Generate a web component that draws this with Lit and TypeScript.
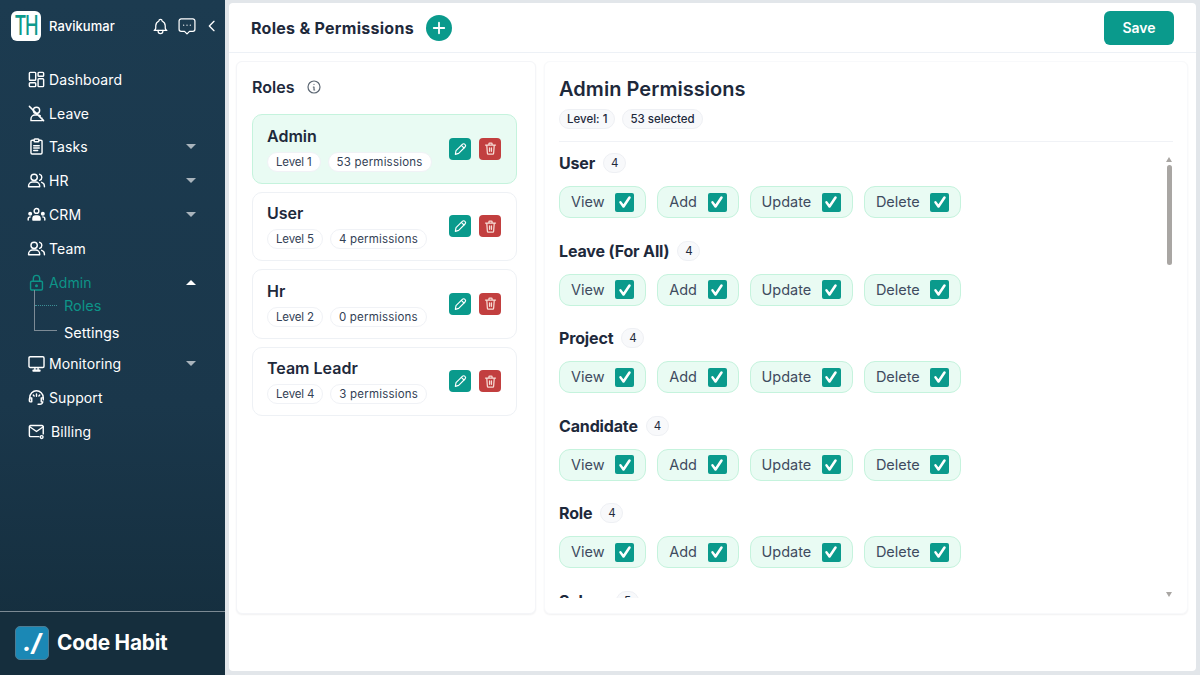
import { LitElement, css, html, svg } from 'lit'
import { customElement } from 'lit/decorators.js'

const icon = (body: unknown, size = 20, sw = 1.8) => html`<svg class="ico" width=${size} height=${size} viewBox="0 0 24 24" fill="none" stroke="currentColor" stroke-width=${sw} stroke-linecap="round" stroke-linejoin="round">${body}</svg>`

const icons: Record<string, unknown> = {
  dashboard: svg`<rect x="3" y="3" width="8" height="10" rx="1"/><rect x="14" y="3" width="7" height="5" rx="1"/><rect x="14" y="11" width="7" height="10" rx="1"/><rect x="3" y="16" width="8" height="5" rx="1"/>`,
  leave: svg`<circle cx="12" cy="8" r="4"/><path d="M5 21v-2a5 5 0 0 1 5-5h4c1 0 2 .3 2.8 .9M19 18v3H6M3 3l18 18"/>`,
  tasks: svg`<path d="M9 4H6.500A1.500 1.500 0 0 0 5 5.500V20a1.500 1.500 0 0 0 1.500 1.500h11A1.500 1.500 0 0 0 19 20V5.500A1.500 1.500 0 0 0 17.500 4H15"/><rect x="9" y="2.500" width="6" height="3.500" rx="1"/><path d="M8.500 11h7M8.500 14h7M8.500 17h5"/>`,
  users: svg`<circle cx="9" cy="8" r="4"/><path d="M2 20v-1a5 5 0 0 1 5-5h4a5 5 0 0 1 5 5v1zM16 4.200a4 4 0 0 1 0 7.600M22 20v-1a5 5 0 0 0-3.500-4.700"/>`,
  crm: svg`<circle cx="12" cy="7.500" r="3"/><path d="M7.500 19v-1.500a3.500 3.500 0 0 1 3.500-3.500h2a3.500 3.500 0 0 1 3.500 3.500V19z" fill="currentColor"/><circle cx="4" cy="11" r="1.600" fill="currentColor"/><circle cx="20" cy="11" r="1.600" fill="currentColor"/><path d="M1.500 19v-1.500a2.500 2.500 0 0 1 2.500-2.500M22.500 19v-1.500a2.500 2.500 0 0 0-2.500-2.500"/>`,
  lock: svg`<rect x="4.500" y="10.500" width="15" height="11" rx="1.500"/><path d="M8 10.500V7a4 4 0 0 1 8 0v3.500"/><circle cx="12" cy="16" r="1" fill="currentColor"/>`,
  monitor: svg`<rect x="2.500" y="3.500" width="19" height="13.500" rx="1.500"/><path d="M8 21h8" stroke-width="2.600"/><path d="M10 17.500v2.500M14 17.500v2.500"/>`,
  support: svg`<path d="M3.500 15v-3a8.500 8.500 0 0 1 17 0v3"/><path d="M3.500 12.500H6v5H4.500a1.500 1.500 0 0 1-1.500-1.500v-2zM20.500 12.500H18v5h1.500M20 17.500a4 4 0 0 1-4 3h-2"/><path d="M12 7.500v3M8 9l1 1M16 9l-1 1"/>`,
  billing: svg`<path d="M20.500 15V6a1.500 1.500 0 0 0-1.500-1.500H4.500A1.500 1.500 0 0 0 3 6v11a1.500 1.500 0 0 0 1.500 1.500H15"/><path d="M3.500 6l8.500 6 8.500-6"/><circle cx="18.500" cy="19" r="1.800"/>`,
  bell: svg`<path d="M10 5a2 2 0 1 1 4 0 7 7 0 0 1 4 6v3a4 4 0 0 0 2 3H4a4 4 0 0 0 2-3v-3a7 7 0 0 1 4-6"/><path d="M9 17v1a3 3 0 0 0 6 0v-1"/>`,
  chat: svg`<path d="M5 3.500h14a2.500 2.500 0 0 1 2.500 2.500v10a2.500 2.500 0 0 1-2.500 2.500h-4L12 21.500 9 18.500H5A2.500 2.500 0 0 1 2.500 16V6A2.500 2.500 0 0 1 5 3.500z"/><path d="M8 11h.01M12 11h.01M16 11h.01"/>`,
  back: svg`<path d="M15 5l-7 7 7 7"/>`,
  info: svg`<circle cx="12" cy="12" r="9"/><path d="M12 8h.01M11 12h1v4.500h1"/>`,
  plus: svg`<path d="M12 5v14M5 12h14"/>`,
  pencil: svg`<path d="M6 14.500 15.500 5a2.800 2.800 0 0 1 4 4L10 18.500 5 20z"/><path d="M14 6.500l4 4"/>`,
  trash: svg`<path d="M4 6.500h16M9.500 6.500V4.500a1 1 0 0 1 1-1h3a1 1 0 0 1 1 1v2M6 6.500l1 13a1.500 1.500 0 0 0 1.500 1.500h7a1.500 1.500 0 0 0 1.500-1.500l1-13"/><path d="M10.500 11v5.500M13.500 11v5.500"/>`,
  check: svg`<path d="M6 12.500l4 5.500 8-12"/>`,
}

type NavItem = { label: string; icon: string; caret?: 'down' | 'up'; active?: boolean }

const navTop: NavItem[] = [
  { label: 'Dashboard', icon: 'dashboard' },
  { label: 'Leave', icon: 'leave' },
  { label: 'Tasks', icon: 'tasks', caret: 'down' },
  { label: 'HR', icon: 'users', caret: 'down' },
  { label: 'CRM', icon: 'crm', caret: 'down' },
  { label: 'Team', icon: 'users' },
  { label: 'Admin', icon: 'lock', caret: 'up', active: true },
]
const navBottom: NavItem[] = [
  { label: 'Monitoring', icon: 'monitor', caret: 'down' },
  { label: 'Support', icon: 'support' },
  { label: 'Billing', icon: 'billing' },
]

const roles = [
  { name: 'Admin', level: 'Level 1', perms: '53 permissions', active: true },
  { name: 'User', level: 'Level 5', perms: '4 permissions' },
  { name: 'Hr', level: 'Level 2', perms: '0 permissions' },
  { name: 'Team Leadr', level: 'Level 4', perms: '3 permissions' },
]

const groups = [
  { name: 'User', count: 4 },
  { name: 'Leave (For All)', count: 4 },
  { name: 'Project', count: 4 },
  { name: 'Candidate', count: 4 },
  { name: 'Role', count: 4 },
  { name: 'Salary', count: 5 },
]

@customElement('app-root')
export class AppRoot extends LitElement {
  static styles = css`
    :host {
      display: block;
      width: 1200px;
      height: 675px;
      overflow: hidden;
      font-family: Inter, 'Noto Sans', sans-serif;
      color: #1e293b;
      background: #e2e6ea;
    }
    .ico { display: block; flex: none; }

    .page { display: flex; height: 675px; }

    /* Sidebar */
    .side {
      width: 225px;
      flex: none;
      display: flex;
      flex-direction: column;
      color: #fff;
      background: linear-gradient(180deg, #1c3b50 0%, #1a374b 60%, #142d3c 100%);
    }
    .side-top {
      height: 52px;
      padding: 11px 5px 0 11px;
      box-sizing: border-box;
      display: flex;
      align-items: flex-start;
    }
    .th {
      width: 30px;
      height: 30px;
      border-radius: 6px;
      background: #fff;
      color: #0d9a8c;
      display: flex;
      align-items: center;
      justify-content: center;
    }
    .th span {
      font-size: 24px;
      font-weight: 500;
      line-height: 24px;
      letter-spacing: -2px;
      transform: scale(.76, 1.14);
    }
    .user { margin-left: 8px; font-size: 13px; font-weight: 500; line-height: 30px; letter-spacing: .05px; flex: 1; }
    .top-icons { display: flex; align-items: center; gap: 7px; height: 30px; }

    nav { padding: 10.500px 26px 0 27px; flex: 1; }
    .item {
      display: flex;
      align-items: center;
      height: 33.800px;
      gap: 2px;
      font-size: 14px;
      font-weight: 400;
      letter-spacing: .1px;
    }
    .item .label { flex: 1; margin-left: 1px; }
    .item .label.shift { margin-left: 3px; }
    .item.active { color: #0d9488; }
    .caret { width: 0; height: 0; border-left: 5.500px solid transparent; border-right: 5.500px solid transparent; margin-right: 3px; }
    .caret.down { border-top: 5px solid #a9b4bc; }
    .caret.up { border-bottom: 5px solid #fff; }

    .sub { position: relative; padding-left: 37px; margin-top: -7px; margin-bottom: .5px; }
    .sub div { height: 27px; line-height: 27px; font-size: 14.500px; }
    .sub .on { color: #0d9488; }
    .tree { position: absolute; left: 7px; top: -2px; width: 22px; height: 40px; border-left: 1px solid #7d8b96; border-bottom: 1px solid #7d8b96; }
    .tree::before { content: ''; position: absolute; left: 0; right: 0; top: 15px; border-top: 1px dotted #3d8f96; }

    .brand {
      height: 64px;
      flex: none;
      box-sizing: border-box;
      border-top: 1px solid #7c8a94;
      padding: 14px 15px 0;
      display: flex;
      align-items: flex-start;
      gap: 8px;
      background: #152e3d;
    }
    .mark {
      width: 34px;
      height: 34px;
      box-sizing: border-box;
      border-radius: 5px;
      border: 1px solid #4d7c93;
      background: #1b88b5;
      font-size: 24px;
      font-weight: 800;
      font-style: italic;
      line-height: 31px;
      text-align: center;
    }
    .brand-name { font-size: 20.800px; font-weight: 700; line-height: 34px; letter-spacing: -.2px; }

    /* Main */
    .main {
      flex: 1;
      margin: 3px 4px 4px 4px;
      background: #fff;
      border-radius: 4px;
      display: flex;
      flex-direction: column;
      min-width: 0;
    }
    .bar {
      height: 50px;
      flex: none;
      box-sizing: border-box;
      border-bottom: 1px solid #edf1f6;
      padding: 0 22px 0 22px;
      display: flex;
      align-items: center;
    }
    h1 { margin: 0; font-size: 16px; font-weight: 700; letter-spacing: .28px; }
    .add {
      width: 26px;
      height: 26px;
      margin-left: 12px;
      border-radius: 50%;
      background: #0a9a8c;
      color: #fff;
      display: flex;
      align-items: center;
      justify-content: center;
    }
    .save {
      margin-left: auto;
      width: 70px;
      height: 34px;
      border: 0;
      border-radius: 6px;
      background: #0a9a8c;
      color: #fff;
      font: 600 14px Inter, sans-serif;
    }

    .cols { display: flex; gap: 8px; padding: 8px 8px 0 7px; height: 561px; box-sizing: border-box; }
    .panel {
      border: 1px solid #f4f5f8;
      border-radius: 6px;
      box-sizing: border-box;
      height: 553px;
      background: #fff;
      box-shadow: 0 1px 2px rgba(15, 23, 42, .06);
    }
    .roles { width: 300px; flex: none; padding: 14px 18px 0 15px; }
    .roles-head { display: flex; align-items: center; gap: 12px; height: 22px; margin-bottom: 16px; font-size: 16px; font-weight: 600; }
    .roles-head .ico { color: #5c6773; }
    .role {
      height: 69.500px;
      box-sizing: border-box;
      margin-bottom: 8px;
      padding: 0 15px 0 14px;
      border: 1px solid #eef1f5;
      border-radius: 10px;
      display: flex;
      align-items: center;
      justify-content: space-between;
    }
    .role.active { background: #e9fbf3; border-color: #c5f3dd; }
    .role-name { font-size: 16px; font-weight: 600; line-height: 20px; margin-bottom: 6px; }
    .role-tags { display: flex; gap: 7px; }
    .tag {
      height: 20px;
      padding: 0 8px;
      border: 1px solid #f0f2f6;
      border-radius: 10px;
      background: #fff;
      font-size: 11.500px;
      line-height: 18px;
      box-sizing: border-box;
      color: #334155;
    }
    .tag.lvl { letter-spacing: -.15px; }
    .tag.cnt { letter-spacing: .2px; }
    .role-btns { display: flex; gap: 8px; }
    .sq { width: 22px; height: 22px; border-radius: 4px; display: flex; align-items: center; justify-content: center; color: #fff; }
    .sq.edit { background: #0a9a8c; }
    .sq.del { background: #c23f3f; color: #f7dcd5; }

    .perms { flex: 1; min-width: 0; padding: 14px 14px 0 14px; position: relative; border-color: #f8f9fb; }
    h2 { margin: 0; font-size: 20px; font-weight: 600; line-height: 26px; letter-spacing: .05px; }
    .meta { display: flex; gap: 7px; margin-top: 7px; padding-bottom: 12px; border-bottom: 1px solid #f0f2f6; }
    .meta span {
      height: 20px;
      padding: 0 7px;
      box-sizing: border-box;
      border: 1px solid #eef0f4;
      border-radius: 10px;
      background: #f8f9fb;
      font-size: 11.500px;
      line-height: 19px;
      font-weight: 500;
    }
    .list { height: 456px; overflow: hidden; padding-top: 10px; box-sizing: border-box; }
    .group { height: 87.500px; }
    .group-head { display: flex; align-items: center; gap: 8px; height: 22px; font-size: 16px; font-weight: 700; letter-spacing: -.15px; }
    .count {
      min-width: 23px;
      height: 20px;
      box-sizing: border-box;
      border: 1px solid #eef0f4;
      border-radius: 10px;
      background: #f8f9fb;
      font-size: 11.500px;
      font-weight: 400;
      line-height: 18px;
      text-align: center;
    }
    .chips { display: flex; gap: 11px; margin-top: 12px; }
    .chip {
      height: 32px;
      box-sizing: border-box;
      padding: 0 11px;
      border: 1px solid #c5f3dd;
      border-radius: 11px;
      background: #e9fbf3;
      display: flex;
      align-items: center;
      gap: 10.600px;
      font-size: 14.500px;
      line-height: 28px;
      color: #3f4b5f;
    }
    .box { width: 19px; height: 19px; border-radius: 2px; background: #0a9a8c; color: #fff; display: flex; align-items: center; justify-content: center; }

    .scroll-thumb { position: absolute; left: 622px; top: 103px; width: 5px; height: 100px; border-radius: 3px; background: #a9a6a3; }
    .arrow { position: absolute; left: 621px; width: 0; height: 0; border-left: 3.500px solid transparent; border-right: 3.500px solid transparent; }
    .arrow.up { top: 95px; border-bottom: 5px solid #a9a6a3; }
    .arrow.down { top: 530px; border-top: 5px solid #a9a6a3; }
  `

  private navItem(n: NavItem) {
    return html`<div class="item ${n.active ? 'active' : ''}">
      ${icon(icons[n.icon], 19)}
      <span class="label ${n.icon === 'billing' ? 'shift' : ''}">${n.label}</span>
      ${n.caret ? html`<span class="caret ${n.caret}"></span>` : ''}
    </div>`
  }

  render() {
    return html`
      <div class="page">
        <aside class="side">
          <div class="side-top">
            <div class="th"><span>TH</span></div>
            <div class="user">Ravikumar</div>
            <div class="top-icons">
              ${icon(icons.bell, 19, 1.6)}${icon(icons.chat, 20, 1.5)}${icon(icons.back, 16, 2)}
            </div>
          </div>
          <nav>
            ${navTop.map((n) => this.navItem(n))}
            <div class="sub">
              <span class="tree"></span>
              <div class="on">Roles</div>
              <div>Settings</div>
            </div>
            ${navBottom.map((n) => this.navItem(n))}
          </nav>
          <div class="brand">
            <div class="mark">./</div>
            <div class="brand-name">Code Habit</div>
          </div>
        </aside>

        <main class="main">
          <div class="bar">
            <h1>Roles &amp; Permissions</h1>
            <div class="add">${icon(icons.plus, 18, 2.4)}</div>
            <button class="save">Save</button>
          </div>
          <div class="cols">
            <section class="panel roles">
              <div class="roles-head">Roles ${icon(icons.info, 16, 1.8)}</div>
              ${roles.map(
                (r) => html`<div class="role ${r.active ? 'active' : ''}">
                  <div>
                    <div class="role-name">${r.name}</div>
                    <div class="role-tags"><span class="tag lvl">${r.level}</span><span class="tag cnt">${r.perms}</span></div>
                  </div>
                  <div class="role-btns">
                    <div class="sq edit">${icon(icons.pencil, 16, 1.7)}</div>
                    <div class="sq del">${icon(icons.trash, 15, 2)}</div>
                  </div>
                </div>`,
              )}
            </section>
            <section class="panel perms">
              <h2>Admin Permissions</h2>
              <div class="meta"><span>Level: 1</span><span>53 selected</span></div>
              <div class="list">
                ${groups.map(
                  (g) => html`<div class="group">
                    <div class="group-head">${g.name} <span class="count">${g.count}</span></div>
                    <div class="chips">
                      ${['View', 'Add', 'Update', 'Delete'].map(
                        (c) => html`<div class="chip">${c}<span class="box">${icon(icons.check, 18, 3.4)}</span></div>`,
                      )}
                    </div>
                  </div>`,
                )}
              </div>
              <span class="arrow up"></span>
              <span class="scroll-thumb"></span>
              <span class="arrow down"></span>
            </section>
          </div>
        </main>
      </div>
    `
  }
}
